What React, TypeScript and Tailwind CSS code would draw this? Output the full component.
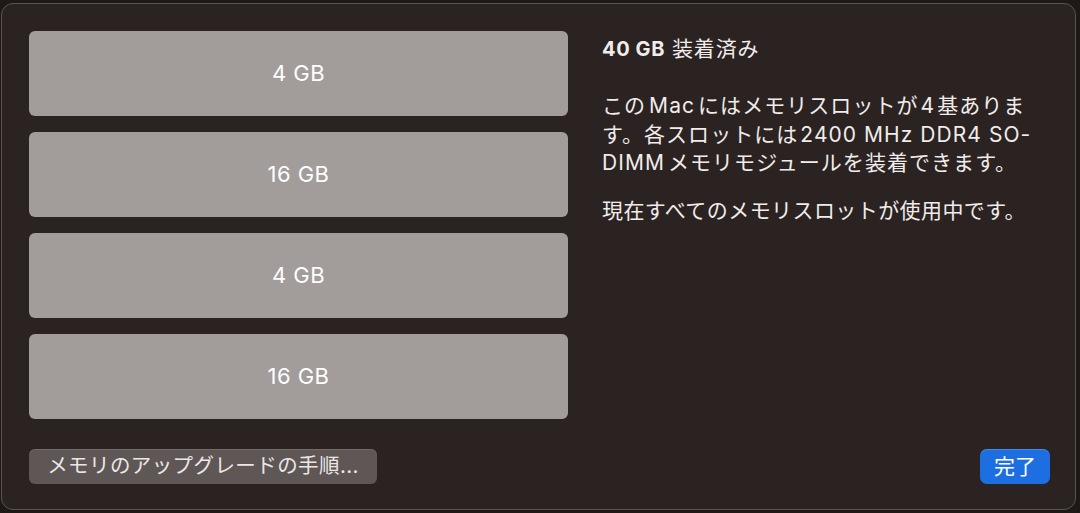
import React from 'react';

const slots = ['4 GB', '16 GB', '4 GB', '16 GB'];

const font = { fontFamily: 'Inter, "Noto Sans CJK JP", sans-serif' };

const App: React.FC = () => {
  return (
    <div className="w-[1080px] h-[513px] bg-[#1e1817] pt-[3px] pl-[1px] pr-[4px] pb-[3px]" style={font}>
      <div className="h-full rounded-[12px] border border-[#5a5351] bg-[#2a2321] flex flex-col pl-[27px] pr-[25px] pt-[27px] pb-[25px]">
        {/* slots + info */}
        <div className="flex gap-[34px]">
          <div className="w-[539px] flex flex-col gap-[16px]">
            {slots.map((s, i) => (
              <div
                key={i}
                className="h-[85px] rounded-[6px] bg-[#a29c9b] flex items-center justify-center text-white text-[22px] tracking-[0.02em]"
              >
                {s}
              </div>
            ))}
          </div>

          <div className="flex-1 text-[#f1eceb] pt-[4px] whitespace-nowrap">
            <h2 className="text-[20px] font-bold leading-[28px] tracking-[0.03em]">
              40 GB<span className="ml-[7px] font-normal text-[21px] tracking-[0.04em]">装着済み</span>
            </h2>
            <p className="mt-[29px] text-[21px] leading-[28.5px] tracking-[0.05em]">
              この<span className="mx-[3px]">Mac</span>にはメモリスロットが<span className="mx-[2px]">4</span>基ありま
              <br />
              す。各スロットには<span className="ml-[2px]">2400 MHz DDR4 SO-</span>
              <br />
              <span className="mr-[3px]">DIMM</span>メモリモジュールを装着できます。
            </p>
            <p className="mt-[19px] text-[21px] leading-[28.5px] tracking-[0.02em]">現在すべてのメモリスロットが使用中です。</p>
          </div>
        </div>

        {/* footer */}
        <div className="mt-auto flex items-center justify-between">
          <button className="h-[35px] w-[348px] rounded-[6px] bg-[#5e5756] text-[#ece7e6] text-[20.5px] tracking-[0.02em] shadow-[inset_0_1px_0_rgba(255,255,255,0.12)]">
            メモリのアップグレードの手順...
          </button>
          <button className="h-[35px] w-[70px] rounded-[7px] bg-[#1d6ee0] text-white text-[21px] shadow-[inset_0_1px_0_rgba(255,255,255,0.18)]">
            完了
          </button>
        </div>
      </div>
    </div>
  );
};

export default App;
